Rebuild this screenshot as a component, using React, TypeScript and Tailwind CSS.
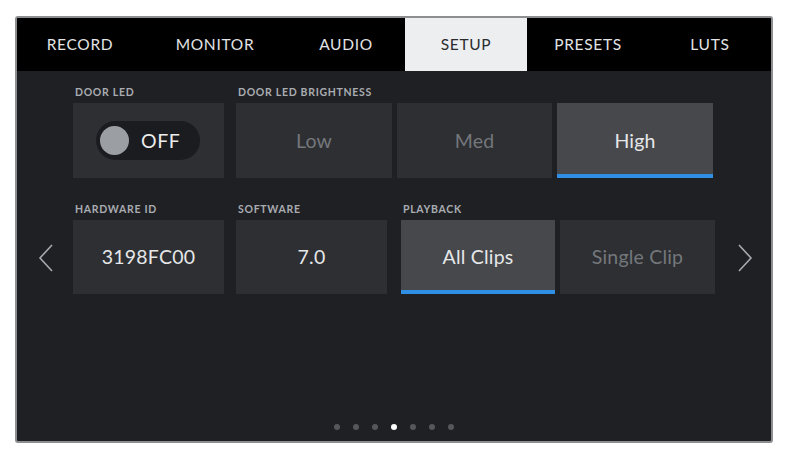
import { useState } from "react";

const tabs = [
  { label: "RECORD", w: "w-[126px]" },
  { label: "MONITOR", w: "w-[144px]" },
  { label: "AUDIO", w: "w-[118px]" },
  { label: "SETUP", w: "w-[122px]" },
  { label: "PRESETS", w: "w-[122px]" },
  { label: "LUTS", w: "flex-1" },
];

const Label = ({ children }: { children: string }) => (
  <div className="h-[12px] mb-[5px] pl-[2px] text-[10.5px] font-bold tracking-[0.7px] leading-[12px] text-[#a9acb1]">
    {children}
  </div>
);

const Card = ({
  text,
  w,
  selected = false,
  dim = false,
}: {
  text: string;
  w: string;
  selected?: boolean;
  dim?: boolean;
}) => (
  <div
    className={`${w} relative h-full flex items-center justify-center text-[19.5px] tracking-[0.2px] ${
      selected ? "bg-[#46484c]" : "bg-[#2d2f33]"
    } ${dim ? "text-[#74777b]" : "text-[#e6e7e8]"}`}
  >
    <span>{text}</span>
    {selected && <div className="absolute left-0 right-0 bottom-0 h-[4px] bg-[#2f8fe4]" />}
  </div>
);

const Chevron = ({ dir }: { dir: "left" | "right" }) => (
  <svg width="16" height="28" viewBox="0 0 16 28" fill="none">
    <path
      d={dir === "left" ? "M14 1 L2 14 L14 27" : "M2 1 L14 14 L2 27"}
      stroke="#a7aaae"
      strokeWidth="1.6"
    />
  </svg>
);

export default function App() {
  const [active, setActive] = useState("SETUP");

  return (
    <div className="w-[788px] h-[451px] bg-white pt-[16px] pl-[15px] font-['Lato','Noto_Sans',sans-serif]">
      <div className="w-[758px] h-[427px] border-2 border-[#8d8e90] rounded-[3px] overflow-hidden bg-[#1f2024] flex flex-col">
        <div className="h-[53px] bg-black flex">
          {tabs.map((t) => (
            <button
              key={t.label}
              onClick={() => setActive(t.label)}
              className={`${t.w} h-full flex items-center justify-center text-[15.5px] tracking-[0.7px] ${
                active === t.label ? "bg-[#eceef0] text-[#2a2b2e]" : "text-[#e3e4e5]"
              }`}
            >
              {t.label}
            </button>
          ))}
        </div>

        <div className="flex-1 flex">
          <div className="w-[56px] flex items-center justify-center pt-[4px] pl-[2px]">
            <Chevron dir="left" />
          </div>

          <div className="w-[642px] flex flex-col pt-[15px]">
            <div className="flex">
              <div className="w-[151px] mr-[12px]">
                <Label>DOOR LED</Label>
                <div className="h-[75px] bg-[#2d2f33] flex items-center pl-[23px]">
                  <div className="w-[104px] h-[39px] rounded-full bg-[#1b1c20] flex items-center pl-[4px]">
                    <div className="w-[29px] h-[29px] rounded-full bg-[#9b9fa4]" />
                    <span className="ml-[12px] text-[19.5px] tracking-[0.6px] text-[#eceded]">OFF</span>
                  </div>
                </div>
              </div>
              <div className="flex flex-col">
                <Label>DOOR LED BRIGHTNESS</Label>
                <div className="h-[75px] flex gap-[5px]">
                  <Card text="Low" w="w-[156px]" dim />
                  <Card text="Med" w="w-[155px]" dim />
                  <Card text="High" w="w-[156px]" selected />
                </div>
              </div>
            </div>

            <div className="flex mt-[25px]">
              <div className="w-[151px] mr-[12px]">
                <Label>HARDWARE ID</Label>
                <div className="h-[74px]">
                  <Card text="3198FC00" w="w-full" />
                </div>
              </div>
              <div className="w-[151px] mr-[14px]">
                <Label>SOFTWARE</Label>
                <div className="h-[74px]">
                  <Card text="7.0" w="w-full" />
                </div>
              </div>
              <div className="flex flex-col">
                <Label>PLAYBACK</Label>
                <div className="h-[74px] flex gap-[5px]">
                  <Card text="All Clips" w="w-[154px]" selected />
                  <Card text="Single Clip" w="w-[155px]" dim />
                </div>
              </div>
            </div>

            <div className="flex-1" />
            <div className="flex justify-center gap-[13px] pb-[11px] pr-[1px]">
              {[0, 1, 2, 3, 4, 5, 6].map((i) => (
                <div
                  key={i}
                  className={`w-[6px] h-[6px] rounded-full ${i === 3 ? "bg-white" : "bg-[#55575b]"}`}
                />
              ))}
            </div>
          </div>

          <div className="flex-1 flex items-center justify-center pt-[4px] pl-[4px]">
            <Chevron dir="right" />
          </div>
        </div>
      </div>
    </div>
  );
}
